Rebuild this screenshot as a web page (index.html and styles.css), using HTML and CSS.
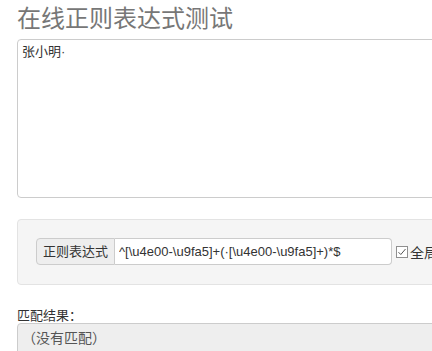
FILE: index.html
```html
<!DOCTYPE html>
<html lang="zh-cn">
<head>
    <meta charset="UTF-8">
    <meta name="viewport" content="width=device-width, initial-scale=1.0">
    <title>在线正则表达式测试</title>
    <link rel="stylesheet" href="styles.css">
</head>
<body>
    <div class="container">
        <h1 class="title">在线正则表达式测试</h1>

        <textarea class="source" id="sourceText">张小明·</textarea>

        <div class="well">
            <div class="input-group">
                <span class="addon">正则表达式</span>
                <input type="text" class="regex" id="regexInput" value="^[\u4e00-\u9fa5]+(·[\u4e00-\u9fa5]+)*$">
                <label class="check">
                    <svg class="check-box" width="12" height="12" viewBox="0 0 12 12">
                        <rect x="0.5" y="0.5" width="11" height="11" fill="#fff" stroke="#8f8f8f"/>
                        <path d="M2.5 6.2 L4.8 8.5 L9.5 3" fill="none" stroke="#555" stroke-width="1"/>
                    </svg>全局</label>
            </div>
        </div>

        <div class="result-label">匹配结果：</div>
        <div class="result">（没有匹配）</div>
    </div>
</body>
</html>
```

FILE: styles.css
```css
html, body {
    overflow: hidden;
}
body {
    margin: 0;
    font-family: "Liberation Sans", "Noto Sans CJK SC", sans-serif;
    font-size: 13px;
    color: #333;
    text-spacing-trim: space-all;
}
.container {
    width: 680px;
    padding-left: 17px;
}
.title {
    margin: 0 0 1px;
    font-size: 24px;
    line-height: 38px;
    font-weight: normal;
    color: #777;
}
.source {
    display: block;
    box-sizing: border-box;
    width: 100%;
    height: 159px;
    margin: 0 0 21px;
    padding: 3px 4px;
    border: 1px solid #ccc;
    border-radius: 4px;
    font-family: inherit;
    font-size: 13px;
    line-height: 18px;
    color: #333;
    resize: none;
}
.well {
    padding: 18px 18px 19px;
    background-color: #f5f5f5;
    border: 1px solid #e3e3e3;
    border-radius: 4px;
}
.input-group {
    display: flex;
    align-items: center;
    height: 27px;
}
.addon {
    box-sizing: border-box;
    height: 27px;
    line-height: 25px;
    padding: 0 6px;
    background-color: #eee;
    border: 1px solid #ccc;
    border-radius: 4px 0 0 4px;
}
.regex {
    box-sizing: border-box;
    width: 277px;
    height: 27px;
    padding: 0 4px;
    border: 1px solid #ccc;
    border-left: none;
    border-radius: 0 4px 4px 0;
    font-family: inherit;
    font-size: 13px;
    color: #333;
}
.check {
    display: flex;
    align-items: center;
    margin-left: 4px;
    font-size: 14px;
}
.check-box {
    margin-right: 2px;
}
.result-label,
.result {
    font-family: "Noto Sans CJK SC", "Liberation Sans", sans-serif;
}
.result-label {
    margin-top: 22px;
    line-height: 16px;
}
.result {
    padding: 3px 4px;
    line-height: 20px;
    background-color: #eee;
    border: 1px solid #ccc;
    border-radius: 4px;
    color: #555;
    font-size: 14px;
    height: 40px;
}
```
